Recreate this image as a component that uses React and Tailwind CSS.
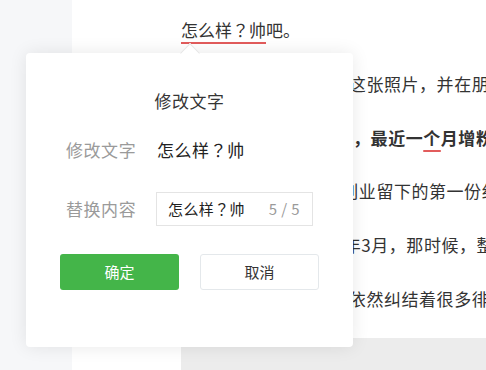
import React from "react";

// Full-width question mark drawn centred in its cell.
const Q = () => <span className="font-['Noto_Sans_CJK_TC',sans-serif]">？</span>;

// Article paragraphs behind the popup.
const paragraphs = [
    "后来我第1次重新翻出这张照片，并在朋友圈里写下了一段话",
    "这是我在18年辞职后创业留下的第一份纪念，一直保存到现在",
    "我依然清楚记得2016年3月，那时候，整个人都还很迷茫",
    "到了第2年，我心里也依然纠结着很多徘徊不定的事情",
];

function EditPopup() {
    return (
        <div className="absolute left-[26px] top-[53px] w-[327px] h-[294px] bg-white rounded-[4px] shadow-[0_0_18px_rgba(0,0,0,0.09)]">
            {/* Arrow pointing at the selected text */}
            <div className="absolute left-[157px] -top-[7px] w-[14px] h-[14px] rotate-45 bg-white border-t border-l border-[#e6e6e6]"></div>

            <p className="relative pt-[36px] text-center leading-[24px] text-[17px] tracking-[0.544px] text-[#353535]">修改文字</p>

            <div className="flex items-center mt-[25px] leading-[24px] text-[17px] tracking-[0.544px]">
                <span className="w-[131px] pl-[40px] text-[#9a9a9a]">修改文字</span>
                <span className="text-[#222]">怎么样<Q />帅</span>
            </div>

            <div className="flex items-center mt-[30px] text-[17px] tracking-[0.544px]">
                <span className="w-[130px] pl-[40px] text-[#9a9a9a] leading-[24px]">替换内容</span>
                <div className="flex items-center justify-between w-[157px] h-[34px] border border-[#e4e4e4] pl-[11px] pr-[12px] text-[15px] tracking-[0.4px]">
                    <span className="text-[#222]">怎么样<Q />帅</span>
                    <span className="text-[#9a9a9a]">5 / 5</span>
                </div>
            </div>

            <div className="flex gap-[21px] mt-[28px] pl-[34px]">
                <button className="w-[119px] h-[36px] rounded-[3px] bg-[#44b549] text-white text-[15px]">确定</button>
                <button className="w-[119px] h-[36px] rounded-[3px] bg-white border border-[#e4e8eb] text-[#353535] text-[15px]">取消</button>
            </div>
        </div>
    );
}

function App() {
    return (
        <div className="relative flex w-full h-[370px] overflow-hidden bg-white font-['Noto_Sans_CJK_SC',sans-serif]">
            <div className="w-[72px] shrink-0 bg-[#f6f7f9]"></div>

            <div className="flex-1 min-w-0 overflow-hidden bg-white pl-[109px] pt-[15px]">
                <div className="text-[17px] tracking-[0.544px] leading-[29.75px] text-[#333] whitespace-nowrap">
                    <p className="mb-[24px] tracking-normal">
                        <span className="underline decoration-2 decoration-[#e25c5c] underline-offset-[5px]">怎么样<Q />帅</span>吧。
                    </p>
                    <p className="mb-[24px]">{paragraphs[0]}</p>
                    <p className="mb-[24px] font-bold">
                        我坚持写了365天之后，最近一<span className="underline decoration-2 decoration-[#e25c5c] underline-offset-[5px]">个</span>月增粉超过一万人
                    </p>
                    {paragraphs.slice(1).map((text, index) => (
                        <p key={index} className="mb-[24px]">{text}</p>
                    ))}
                </div>
                <div className="h-[200px] bg-[#ececec]"></div>
            </div>

            <EditPopup />
        </div>
    );
}

export default App;
